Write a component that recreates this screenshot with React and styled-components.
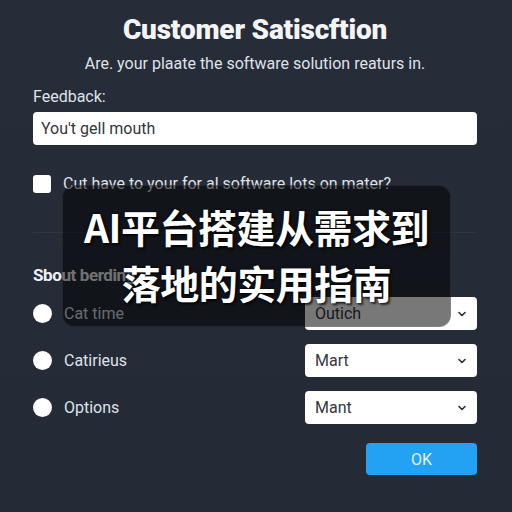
import React from 'react';
import styled, { createGlobalStyle } from 'styled-components';

const GlobalStyle = createGlobalStyle`
  html, body {
    margin: 0;
    padding: 0;
    background: #262b38;
  }
  body {
    font-family: Roboto, "Noto Sans", "Liberation Sans", sans-serif;
  }
`;

const StyledPage = styled.div`
  position: relative;
  width: 512px;
  height: 512px;
  box-sizing: border-box;
  padding: 14px 35px 0 33px;
  background: linear-gradient(180deg, #272c39 0%, #252a37 100%);
  color: #e9ecf1;
  overflow: hidden;
`;

const Title = styled.h1`
  margin: 0;
  font-size: 28px;
  line-height: 32px;
  font-weight: 900;
  text-align: center;
  color: #f3f4f6;
  letter-spacing: -0.2px;
`;

const Subtitle = styled.p`
  margin: 8px 0 0;
  font-size: 16px;
  line-height: 20px;
  text-align: center;
  color: #dfe2e8;
`;

const Label = styled.div`
  margin-top: 13px;
  font-size: 16px;
  line-height: 20px;
  color: #dfe2e8;
`;

const TextInput = styled.div`
  margin-top: 5px;
  height: 33px;
  box-sizing: border-box;
  padding: 0 8px;
  display: flex;
  align-items: center;
  background: #ffffff;
  border-radius: 4px;
  font-size: 16px;
  color: #33363c;
`;

const CheckRow = styled.label`
  margin-top: 30px;
  display: flex;
  align-items: center;
  gap: 12px;
  font-size: 16px;
  line-height: 18px;
  color: #dfe2e8;
`;

const Checkbox = styled.span`
  width: 18px;
  height: 18px;
  border-radius: 3px;
  background: #ffffff;
  flex-shrink: 0;
`;

const Divider = styled.hr`
  margin: 39px 0 0;
  border: 0;
  height: 1px;
  background: #2f3544;
`;

const SectionHeading = styled.h2`
  margin: 32px 0 0;
  font-size: 17px;
  line-height: 20px;
  font-weight: 700;
  color: #f0f1f4;
  letter-spacing: -0.4px;
`;

const OptionList = styled.div`
  margin-top: 12px;
  display: flex;
  flex-direction: column;
  gap: 14px;
`;

const OptionRow = styled.div`
  display: flex;
  align-items: center;
  justify-content: space-between;
  height: 33px;
`;

const RadioLabel = styled.span`
  display: flex;
  align-items: center;
  gap: 12px;
  font-size: 16px;
  color: #dfe2e8;
`;

const Radio = styled.span`
  width: 19px;
  height: 19px;
  border-radius: 50%;
  background: #ffffff;
`;

const Select = styled.div`
  width: 172px;
  height: 33px;
  box-sizing: border-box;
  padding: 0 10px;
  display: flex;
  align-items: center;
  justify-content: space-between;
  background: #ffffff;
  border-radius: 4px;
  font-size: 16px;
  color: #33373e;
`;

const Footer = styled.div`
  margin-top: 19px;
  display: flex;
  justify-content: flex-end;
`;

const OkButton = styled.button`
  width: 111px;
  height: 32px;
  border: 0;
  border-radius: 4px;
  background: #23a2f4;
  color: #e2f3ff;
  font-family: inherit;
  font-size: 16px;
`;

const Banner = styled.div`
  position: absolute;
  left: 62px;
  top: 185px;
  width: 389px;
  height: 142px;
  box-sizing: border-box;
  border-radius: 12px;
  border: 1px solid rgba(255, 255, 255, 0.08);
  background: rgba(0, 0, 0, 0.53);
  display: flex;
  flex-direction: column;
  align-items: center;
  justify-content: center;
  padding-bottom: 4px;
`;

const BannerText = styled.div`
  font-family: "Noto Sans CJK SC", "Noto Sans", sans-serif;
  font-size: 39px;
  line-height: 56px;
  font-weight: 700;
  color: #ffffff;
  text-align: center;
  letter-spacing: -0.5px;
  text-shadow: 0 0 3px rgba(0, 0, 0, 0.8), 2px 2px 2px rgba(0, 0, 0, 0.6);
`;

const Chevron = () => (
  <svg width="10" height="8" viewBox="0 0 10 8">
    <polyline points="2,2.5 5,5.5 8,2.5" fill="none" stroke="#2b2f36" strokeWidth="1.6" strokeLinecap="round" strokeLinejoin="round" />
  </svg>
);

const options = [
  { label: 'Cat time', value: 'Outich' },
  { label: 'Catirieus', value: 'Mart' },
  { label: 'Options', value: 'Mant' },
];

const App = () => {
  return (
    <StyledPage>
      <GlobalStyle />
      <Title>Customer Satiscftion</Title>
      <Subtitle>Are. your plaate the software solution reaturs in.</Subtitle>
      <Label>Feedback:</Label>
      <TextInput>You't gell mouth</TextInput>
      <CheckRow>
        <Checkbox />
        Cut have to your for al software lots on mater?
      </CheckRow>
      <Divider />
      <SectionHeading>Sbout berding</SectionHeading>
      <OptionList>
        {options.map((o) => (
          <OptionRow key={o.label}>
            <RadioLabel>
              <Radio />
              {o.label}
            </RadioLabel>
            <Select>
              {o.value}
              <Chevron />
            </Select>
          </OptionRow>
        ))}
      </OptionList>
      <Footer>
        <OkButton>OK</OkButton>
      </Footer>
      <Banner>
        <BannerText>
          AI平台搭建从需求到
          <br />
          落地的实用指南
        </BannerText>
      </Banner>
    </StyledPage>
  );
};

export default App;
